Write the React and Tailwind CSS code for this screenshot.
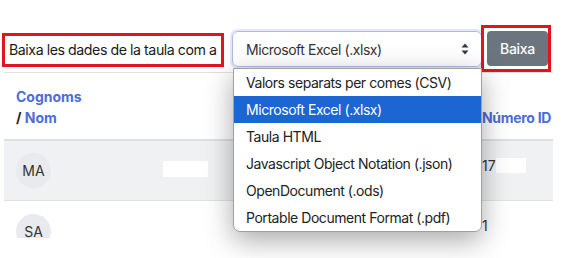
import React from "react";

const FORMATS = [
  "Valors separats per comes (CSV)",
  "Microsoft Excel (.xlsx)",
  "Taula HTML",
  "Javascript Object Notation (.json)",
  "OpenDocument (.ods)",
  "Portable Document Format (.pdf)",
];

const SELECTED = 1;

function SortIcon() {
  return (
    <svg width="8" height="12" viewBox="0 0 8 12" className="shrink-0">
      <path d="M4 0.5 L7.5 4.5 H0.5 Z" fill="#343a40" />
      <path d="M4 11.5 L7.5 7.5 H0.5 Z" fill="#343a40" />
    </svg>
  );
}

function Avatar({ initials }) {
  return (
    <div className="flex h-[35px] w-[35px] items-center justify-center rounded-full bg-[#e8eaed] text-[14px] text-[#333]">
      {initials}
    </div>
  );
}

export default function App() {
  return (
    <div className="relative h-[258px] w-[567px] overflow-hidden bg-white font-['Inter',sans-serif] text-[#212529]">
      {/* Export toolbar */}
      <div className="flex items-start pt-[25px]">
        <label className="ml-[2px] mt-[8px] flex h-[34px] w-[222px] items-center whitespace-nowrap border-[3px] border-[#e3141d] pl-[4px] text-[14.2px] tracking-[-0.45px] text-[#1a1a1a]">
          Baixa les dades de la taula com a
        </label>
        <div className="ml-[8px] mt-[6px] flex h-[36px] w-[250px] items-center justify-between rounded-[6px] border border-[#aebbe9] pl-[13px] pr-[12px] text-[14px] tracking-[-0.45px] text-[#333] shadow-[0_0_0_2px_#e2e7f9]">
          <span>Microsoft Excel (.xlsx)</span>
          <SortIcon />
        </div>
        <div className="ml-[-1px] flex h-[47px] w-[70px] items-center border-[3px] border-[#e3141d] pl-[3px]">
          <button className="flex h-[35px] w-[61px] items-center justify-center rounded-[4px] bg-[#6c757d] text-[14px] font-medium tracking-[-0.3px] text-white">
            Baixa
          </button>
        </div>
      </div>

      {/* Table (cropped) */}
      <div className="ml-[4px] h-[166px] w-[549px] overflow-hidden border-t border-[#dee2e6]">
        <div className="flex h-[68px] items-end border-b-2 border-[#dcdfe3] text-[14px] font-bold leading-[21px]">
          <div className="w-[466px] pb-[11px] pl-[12px]">
            <div className="text-[#4b6dd5]">Cognoms</div>
            <div>
              <span className="text-[#222]">/ </span>
              <span className="text-[#4b6dd5]">Nom</span>
            </div>
          </div>
          <div className="pb-[11px] pl-[12px] tracking-[-0.3px] text-[#4b6dd5]">Número ID</div>
        </div>

        <div className="flex h-[60px] items-center border-b border-[#dee2e6] bg-[#f0f1f3]">
          <div className="flex w-[466px] items-center pl-[12px]">
            <Avatar initials="MA" />
            <div className="ml-[112px] mt-[-4px] h-[16px] w-[45px] bg-white" />
          </div>
          <div className="flex items-center self-start pl-[12px] pt-[14px] text-[14px] text-[#333]">
            <span>17</span>
            <span className="h-[15px] w-[30px] bg-white" />
          </div>
        </div>

        <div className="flex h-[60px] items-center">
          <div className="flex w-[466px] items-center pl-[12px]">
            <Avatar initials="SA" />
            <div className="ml-[129px] mt-[-2px] h-[20px] w-[32px] bg-white" />
          </div>
          <div className="flex items-center self-start pl-[12px] pt-[14px] text-[14px] text-[#333]">
            <span>1</span>
            <span className="h-[20px] w-[34px] bg-white" />
          </div>
        </div>
      </div>

      {/* Open select list */}
      <ul className="absolute left-[233px] top-[68px] w-[249px] rounded-b-[7px] border border-[#a0a0a0] bg-white text-[14px] tracking-[-0.45px] text-[#222] shadow-[0_8px_28px_rgba(0,0,0,0.35)]">
        {FORMATS.map((f, i) => (
          <li
            key={f}
            className={
              i === SELECTED
                ? "flex h-[27px] items-center bg-[#1b66d2] pl-[12px] text-white"
                : "flex h-[27px] items-center pl-[12px]"
            }
          >
            {f}
          </li>
        ))}
      </ul>
    </div>
  );
}
